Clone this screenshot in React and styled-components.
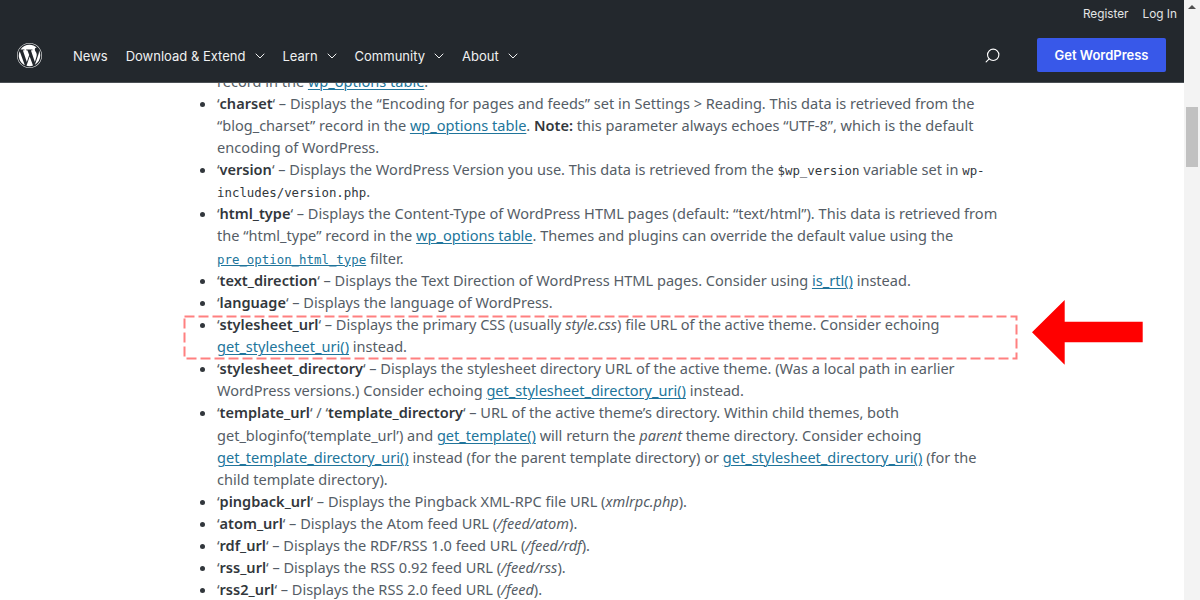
import React from "react";
import styled, { createGlobalStyle } from "styled-components";
import { ChevronDown, Search } from "lucide-react";

const GlobalStyle = createGlobalStyle`
  html, body {
    margin: 0;
    height: 100%;
    overflow: hidden;
    background: #fff;
  }
`;

const Page = styled.div`
  position: relative;
  width: 1200px;
  height: 600px;
  overflow: hidden;
  display: flex;
  background: #fff;
`;

const Main = styled.div`
  position: relative;
  width: 1184px;
  height: 600px;
  overflow: hidden;
`;

const Header = styled.header`
  position: absolute;
  top: 0;
  left: 0;
  right: 0;
  height: 83px;
  background: #23282d;
  border-bottom: 1px solid #4a4f54;
  box-sizing: border-box;
  z-index: 2;
  font-family: Inter, sans-serif;
  color: #fff;
`;

const TopLinks = styled.div`
  display: flex;
  justify-content: flex-end;
  gap: 14px;
  height: 28px;
  padding: 6px 7px 0 0;
  box-sizing: border-box;
  font-size: 11.8px;
  line-height: 17px;
  color: #e4e5e6;
`;

const NavRow = styled.div`
  display: flex;
  align-items: center;
  height: 55px;
  padding: 0 18px 0 17px;
  box-sizing: border-box;
`;

const Logo = styled.svg`
  width: 25px;
  height: 25px;
  margin-right: 31px;
  flex: none;
`;

const Nav = styled.nav`
  display: flex;
  align-items: center;
  gap: 18px;
  flex: 1;
`;

const NavItem = styled.span`
  display: flex;
  align-items: center;
  gap: 6.5px;
  font-size: 13px;
  line-height: 20px;
  color: #f0f1f1;
`;

const Chevron = styled(ChevronDown)`
  margin-right: -3.5px;
`;

const SearchIcon = styled(Search)`
  transform: scaleX(-1);
  margin-right: 36px;
`;

const GetButton = styled.span`
  display: flex;
  align-items: center;
  justify-content: center;
  width: 129px;
  height: 34px;
  margin-bottom: 1px;
  background: #3858e9;
  border-radius: 2px;
  font-size: 13px;
  font-weight: 600;
  color: #fff;
`;

const Content = styled.div`
  padding-top: 69.5px;
`;

const List = styled.ul`
  width: 788px;
  margin: 0 0 0 199px;
  padding: 0 0 0 18px;
  font-family: "Noto Sans", sans-serif;
  font-size: 14.55px;
  line-height: 22.13px;
  color: #555d66;
`;

const Item = styled.li`
  list-style: ${(props) => (props.$plain ? "none" : "disc")};

  &::marker {
    color: #32373c;
  }
`;

const Key = styled.strong`
  font-weight: 600;
  color: #32373c;
`;

const Link = styled.a`
  color: #21759b;
  text-decoration: underline;
  text-decoration-thickness: 1px;
  text-underline-offset: 2px;
`;

const Code = styled.code`
  font-family: "DejaVu Sans Mono", monospace;
  font-size: 12.4px;
  line-height: 0;
  color: #32373c;
`;

const CodeLink = styled(Code)`
  color: #21759b;
  text-decoration: underline;
`;

const Highlight = styled.svg`
  position: absolute;
  left: 183px;
  top: 315px;
  width: 835px;
  height: 45px;
`;

const Arrow = styled.svg`
  position: absolute;
  left: 1032px;
  top: 300px;
  width: 112px;
  height: 65px;
`;

const Scrollbar = styled.div`
  position: relative;
  width: 16px;
  height: 600px;
  flex: none;
  background: #f3f3f3;
`;

const ScrollUp = styled.div`
  position: absolute;
  top: 5px;
  left: 4px;
  border-left: 4px solid transparent;
  border-right: 4px solid transparent;
  border-bottom: 4px solid #505050;
`;

const Thumb = styled.div`
  position: absolute;
  top: 107px;
  left: 2px;
  width: 12px;
  height: 60px;
  background: #c1c1c1;
`;

const navItems = ["Download & Extend", "Learn", "Community", "About"];

const App = () => {
  return (
    <Page>
      <GlobalStyle />
      <Main>
        <Header>
          <TopLinks>
            <span>Register</span>
            <span>Log In</span>
          </TopLinks>
          <NavRow>
            <Logo viewBox="0 0 122.52 122.523">
              <path
                fill="#fff"
                d="M8.708 61.26c0 20.802 12.089 38.779 29.619 47.298L13.258 39.872a52.354 52.354 0 0 0-4.55 21.388zM96.74 58.608c0-6.495-2.333-10.993-4.334-14.494-2.664-4.329-5.161-7.995-5.161-12.324 0-4.831 3.664-9.328 8.825-9.328.233 0 .454.029.681.042-9.35-8.566-21.807-13.796-35.489-13.796-18.36 0-34.513 9.42-43.91 23.688 1.233.037 2.395.063 3.382.063 5.497 0 14.006-.667 14.006-.667 2.833-.167 3.167 3.994.337 4.329 0 0-2.847.335-6.015.501l19.138 56.925 11.501-34.493-8.188-22.434c-2.83-.166-5.511-.501-5.511-.501-2.832-.166-2.5-4.496.332-4.329 0 0 8.679.667 13.843.667 5.496 0 14.006-.667 14.006-.667 2.835-.167 3.168 3.994.337 4.329 0 0-2.853.335-6.015.501l18.992 56.494 5.242-17.517c2.272-7.269 4.001-12.49 4.001-16.989zM62.184 65.857l-15.768 45.819a52.552 52.552 0 0 0 14.846 2.141c6.12 0 11.989-1.058 17.452-2.979a4.615 4.615 0 0 1-.374-.724l-16.156-44.257zM107.376 36.046c.226 1.674.354 3.471.354 5.404 0 5.333-.996 11.328-3.996 18.824l-16.053 46.413c15.624-9.111 26.133-26.038 26.133-45.426.001-9.137-2.333-17.729-6.438-25.215z"
              />
              <path
                fill="#fff"
                d="M61.262 0C27.483 0 0 27.481 0 61.26c0 33.783 27.483 61.263 61.262 61.263 33.778 0 61.265-27.48 61.265-61.263C122.527 27.481 95.04 0 61.262 0zm0 119.715c-32.23 0-58.453-26.223-58.453-58.455 0-32.23 26.222-58.451 58.453-58.451 32.229 0 58.45 26.221 58.45 58.451 0 32.232-26.221 58.455-58.45 58.455z"
              />
            </Logo>
            <Nav>
              <NavItem>News</NavItem>
              {navItems.map((item) => (
                <NavItem key={item}>
                  {item}
                  <Chevron size={16} strokeWidth={1.5} />
                </NavItem>
              ))}
            </Nav>
            <SearchIcon size={17} strokeWidth={1.6} />
            <GetButton>Get WordPress</GetButton>
          </NavRow>
        </Header>

        <Content>
          <List>
            <Item $plain>
              record in the <Link>wp_options table</Link>.
            </Item>
            <Item>
              ‘<Key>charset</Key>‘ – Displays the “Encoding for pages and feeds” set in Settings &gt; Reading. This data is retrieved from the “blog_charset” record in the <Link>wp_options table</Link>. <Key>Note:</Key> this parameter always echoes “UTF-8”, which is the default encoding of WordPress.
            </Item>
            <Item>
              ‘<Key>version</Key>‘ – Displays the WordPress Version you use. This data is retrieved from the <Code>$wp_version</Code> variable set in <Code>wp-includes/version.php</Code>.
            </Item>
            <Item>
              ‘<Key>html_type</Key>‘ – Displays the Content-Type of WordPress HTML pages (default: “text/html”). This data is retrieved from the “html_type” record in the <Link>wp_options table</Link>. Themes and plugins can override the default value using the <CodeLink>pre_option_html_type</CodeLink> filter.
            </Item>
            <Item>
              ‘<Key>text_direction</Key>‘ – Displays the Text Direction of WordPress HTML pages. Consider using <Link>is_rtl()</Link> instead.
            </Item>
            <Item>
              ‘<Key>language</Key>‘ – Displays the language of WordPress.
            </Item>
            <Item>
              ‘<Key>stylesheet_url</Key>‘ – Displays the primary CSS (usually <em>style.css</em>) file URL of the active theme. Consider echoing <Link>get_stylesheet_uri()</Link> instead.
            </Item>
            <Item>
              ‘<Key>stylesheet_directory</Key>‘ – Displays the stylesheet directory URL of the active theme. (Was a local path in earlier WordPress versions.) Consider echoing <Link>get_stylesheet_directory_uri()</Link> instead.
            </Item>
            <Item>
              ‘<Key>template_url</Key>‘ / ‘<Key>template_directory</Key>‘ – URL of the active theme’s directory. Within child themes, both get_bloginfo(‘template_url’) and <Link>get_template()</Link> will return the <em>parent</em> theme directory. Consider echoing <Link>get_template_directory_uri()</Link> instead (for the parent template directory) or <Link>get_stylesheet_directory_uri()</Link> (for the child template directory).
            </Item>
            <Item>
              ‘<Key>pingback_url</Key>‘ – Displays the Pingback XML-RPC file URL (<em>xmlrpc.php</em>).
            </Item>
            <Item>
              ‘<Key>atom_url</Key>‘ – Displays the Atom feed URL (<em>/feed/atom</em>).
            </Item>
            <Item>
              ‘<Key>rdf_url</Key>‘ – Displays the RDF/RSS 1.0 feed URL (<em>/feed/rdf</em>).
            </Item>
            <Item>
              ‘<Key>rss_url</Key>‘ – Displays the RSS 0.92 feed URL (<em>/feed/rss</em>).
            </Item>
            <Item>
              ‘<Key>rss2_url</Key>‘ – Displays the RSS 2.0 feed URL (<em>/feed</em>).
            </Item>
          </List>
        </Content>

        <Highlight viewBox="0 0 835 45">
          <rect x="1.5" y="1.5" width="832" height="42" fill="none" stroke="#ff8080" strokeWidth="2" strokeDasharray="10 4" />
        </Highlight>
        <Arrow viewBox="0 0 112 65">
          <path fill="#ff0000" d="M0 32.3 32.7 0V21.7H110.7V42.3H32.7V64.7Z" />
        </Arrow>
      </Main>
      <Scrollbar>
        <ScrollUp />
        <Thumb />
      </Scrollbar>
    </Page>
  );
};

export default App;
